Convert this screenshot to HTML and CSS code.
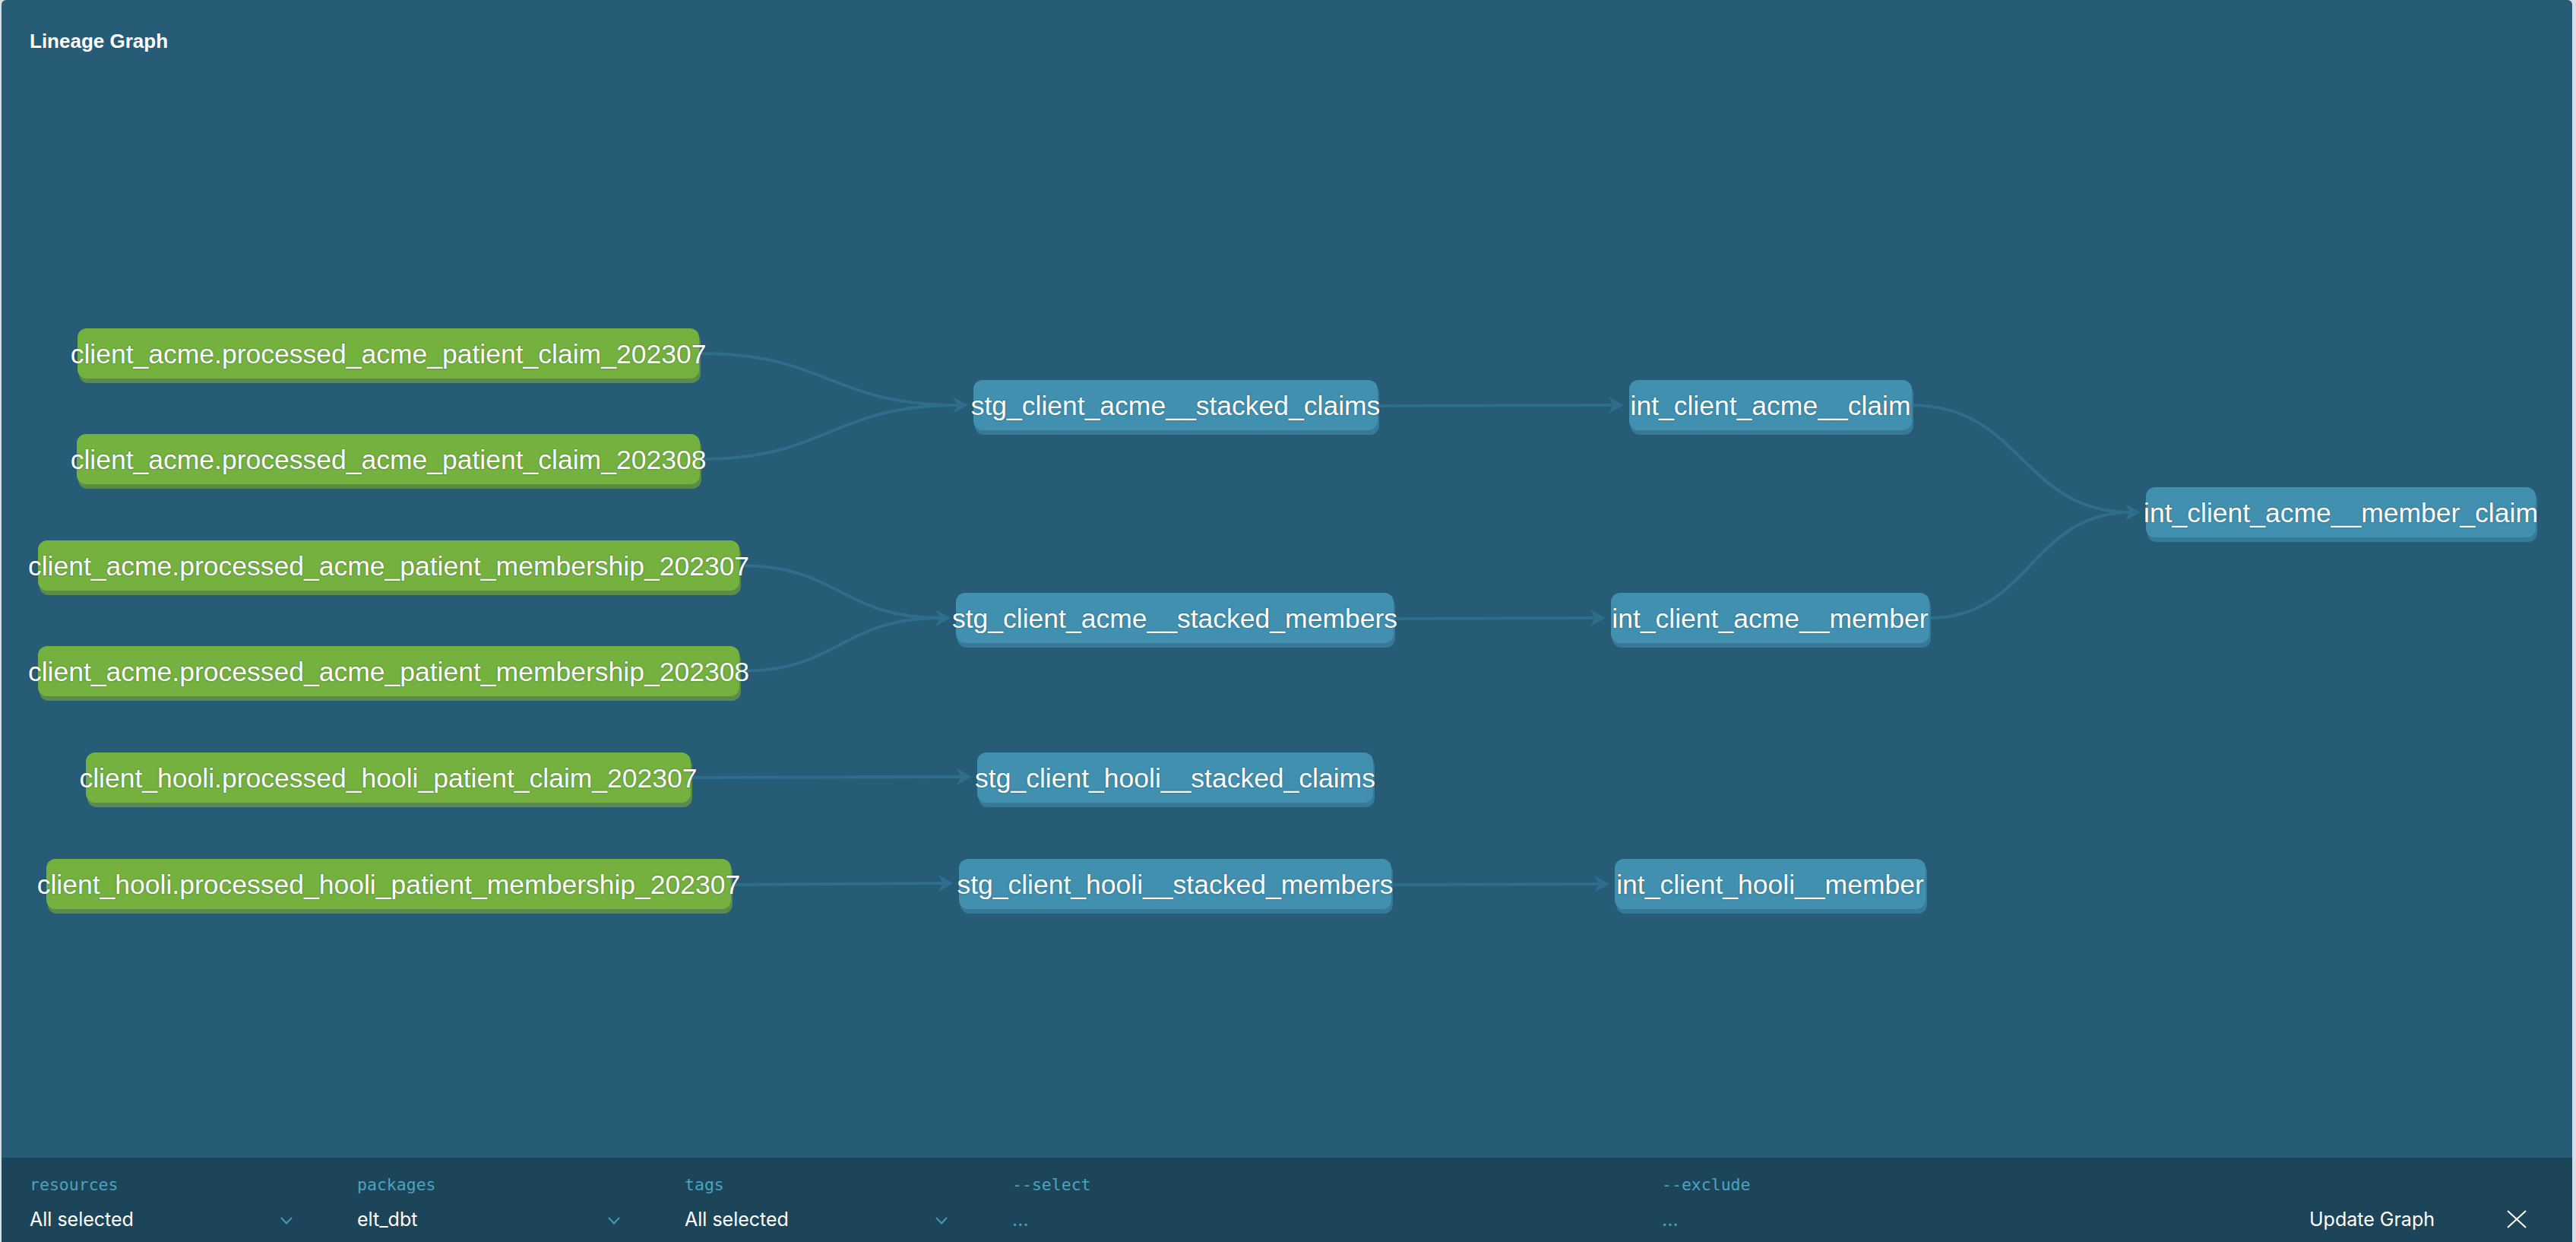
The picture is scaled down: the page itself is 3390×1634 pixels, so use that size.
FILE: index.html
```html
<!DOCTYPE html>
<html lang="en">
<head>
<meta charset="utf-8">
<title>Lineage Graph</title>
<link rel="stylesheet" href="styles.css">
</head>
<body>
<div class="panel">
  <header class="panel-head"><h1 class="title">Lineage Graph</h1></header>
  <main class="canvas">
    <svg class="edges" width="3383" height="1423" viewBox="0 0 3383 1423">
      <g class="edge-lines">
        <path d="M918 365 C1089 365 1089 433 1260 433"/>
        <path d="M919 504 C1089.5 504 1089.5 433 1260 433"/>
        <path d="M971 644 C1104 644 1104 713 1237 713"/>
        <path d="M971 783 C1104 783 1104 713 1237 713"/>
        <path d="M907 923 L1265 922"/>
        <path d="M960 1064 L1241 1062"/>
        <path d="M1811 434 L2123 433"/>
        <path d="M1832 714 L2099 713"/>
        <path d="M1829 1064 L2104 1063"/>
        <path d="M2514 433 C2658.5 433 2658.5 574 2803 574"/>
        <path d="M2537 713 C2670 713 2670 574 2803 574"/>
      </g>
      <g class="edge-heads">
        <polygon points="1272,433 1252,422 1258,433 1252,444"/>
        <polygon points="1249,713 1229,702 1235,713 1229,724"/>
        <polygon points="1277,922 1257,911 1263,922 1257,933"/>
        <polygon points="1253,1062 1233,1051 1239,1062 1233,1073"/>
        <polygon points="2135,433 2115,422 2121,433 2115,444"/>
        <polygon points="2111,713 2091,702 2097,713 2091,724"/>
        <polygon points="2116,1063 2096,1052 2102,1063 2096,1074"/>
        <polygon points="2815,574 2795,563 2801,574 2795,585"/>
      </g>
    </svg>

    <div class="node source" style="left:100px;top:332px;width:818px"><span>client_acme.processed_acme_patient_claim_202307</span></div>
    <div class="node source" style="left:99px;top:471px;width:820px"><span>client_acme.processed_acme_patient_claim_202308</span></div>
    <div class="node source" style="left:48px;top:611px;width:923px"><span>client_acme.processed_acme_patient_membership_202307</span></div>
    <div class="node source" style="left:48px;top:750px;width:923px"><span>client_acme.processed_acme_patient_membership_202308</span></div>
    <div class="node source" style="left:111px;top:890px;width:796px"><span>client_hooli.processed_hooli_patient_claim_202307</span></div>
    <div class="node source" style="left:59px;top:1030px;width:901px"><span>client_hooli.processed_hooli_patient_membership_202307</span></div>

    <div class="node model" style="left:1279px;top:400px;width:532px"><span>stg_client_acme__stacked_claims</span></div>
    <div class="node model" style="left:1256px;top:680px;width:576px"><span>stg_client_acme__stacked_members</span></div>
    <div class="node model" style="left:1284px;top:890px;width:521px"><span>stg_client_hooli__stacked_claims</span></div>
    <div class="node model" style="left:1260px;top:1030px;width:569px"><span>stg_client_hooli__stacked_members</span></div>

    <div class="node model" style="left:2142px;top:400px;width:372px"><span>int_client_acme__claim</span></div>
    <div class="node model" style="left:2118px;top:680px;width:419px"><span>int_client_acme__member</span></div>
    <div class="node model" style="left:2123px;top:1030px;width:409px"><span>int_client_hooli__member</span></div>

    <div class="node model" style="left:2822px;top:541px;width:513px"><span>int_client_acme__member_claim</span></div>
  </main>
  <footer class="filterbar">
    <div class="field field-select">
      <div class="field-label">resources</div>
      <div class="field-value"><span>All selected</span><svg class="chev" width="16" height="10" viewBox="0 0 16 10"><polyline points="1,1 8,8.5 15,1"/></svg></div>
    </div>
    <div class="field field-select">
      <div class="field-label">packages</div>
      <div class="field-value"><span>elt_dbt</span><svg class="chev" width="16" height="10" viewBox="0 0 16 10"><polyline points="1,1 8,8.5 15,1"/></svg></div>
    </div>
    <div class="field field-select">
      <div class="field-label">tags</div>
      <div class="field-value"><span>All selected</span><svg class="chev" width="16" height="10" viewBox="0 0 16 10"><polyline points="1,1 8,8.5 15,1"/></svg></div>
    </div>
    <div class="field field-text">
      <div class="field-label">--select</div>
      <div class="field-value placeholder">...</div>
    </div>
    <div class="field field-text">
      <div class="field-label">--exclude</div>
      <div class="field-value placeholder">...</div>
    </div>
    <div class="actions">
      <span class="update">Update Graph</span>
      <svg class="close" width="26" height="24" viewBox="0 0 26 24"><line x1="1" y1="1" x2="25" y2="23"/><line x1="25" y1="1" x2="1" y2="23"/></svg>
    </div>
  </footer>
</div>
</body>
</html>
```

FILE: styles.css
```css
* { box-sizing: border-box; }
html, body { margin: 0; padding: 0; }
body {
  width: 3390px;
  height: 1634px;
  background: #d9dee2;
  overflow: hidden;
  font-family: "Liberation Sans", Arial, sans-serif;
}
.panel {
  margin-left: 2px;
  width: 3383px;
  height: 1634px;
  background: #275c77;
  border-radius: 6px 6px 0 0;
  display: flex;
  flex-direction: column;
  overflow: hidden;
}
.panel-head {
  height: 100px;
  flex: 0 0 100px;
  padding: 39px 0 0 37px;
}
.title {
  margin: 0;
  font-family: "Liberation Sans", Arial, sans-serif;
  font-weight: bold;
  font-size: 26px;
  line-height: 30px;
  color: #ffffff;
}
.canvas {
  position: relative;
  flex: 1 1 auto;
}
.edges {
  position: absolute;
  left: 0;
  top: 0;
}
.edge-lines path {
  fill: none;
  stroke: #2e6d8b;
  stroke-width: 4;
}
.edge-heads polygon {
  fill: #2e6d8b;
}
.node {
  position: absolute;
  height: 66px;
  border-radius: 12px;
  display: flex;
  align-items: center;
  justify-content: center;
  white-space: nowrap;
}
.node span {
  font-family: "Liberation Sans", Arial, sans-serif;
  font-size: 35.5px;
  color: #ffffff;
  text-shadow: 0 0 2px rgba(20, 40, 50, 0.55);
  margin-top: 2px;
}
.source {
  background: #74b13e;
  box-shadow: 2px 6px 0 #5a8b4d;
}
.model {
  background: #4190b0;
  box-shadow: 2px 6px 0 #367a98;
}
.filterbar {
  flex: 0 0 111px;
  height: 111px;
  background: #1d4559;
  display: flex;
}
.field {
  padding-top: 23px;
  padding-left: 37px;
}
.field-select {
  width: 431px;
  padding-right: 48px;
}
.field-text {
  width: 855px;
}
.field-label {
  font-family: "DejaVu Sans Mono", "Liberation Mono", monospace;
  font-size: 21.5px;
  line-height: 26px;
  color: #4aa3c2;
}
.field-value {
  margin-top: 17px;
  height: 30px;
  display: flex;
  align-items: center;
  justify-content: space-between;
  font-family: Inter, "Liberation Sans", sans-serif;
  font-size: 25px;
  line-height: 30px;
  color: #ffffff;
}
.field-value.placeholder {
  color: #4aa3c2;
}
.chev {
  margin-top: 4px;
}
.chev polyline {
  fill: none;
  stroke: #4797b5;
  stroke-width: 2;
}
.actions {
  margin-left: auto;
  padding-top: 66px;
  padding-right: 60px;
  height: 96px;
  display: flex;
  align-items: center;
  gap: 95px;
}
.update {
  font-family: Inter, "Liberation Sans", sans-serif;
  font-size: 25px;
  line-height: 30px;
  color: #ffffff;
}
.close line {
  stroke: #ffffff;
  stroke-width: 2;
}
```
